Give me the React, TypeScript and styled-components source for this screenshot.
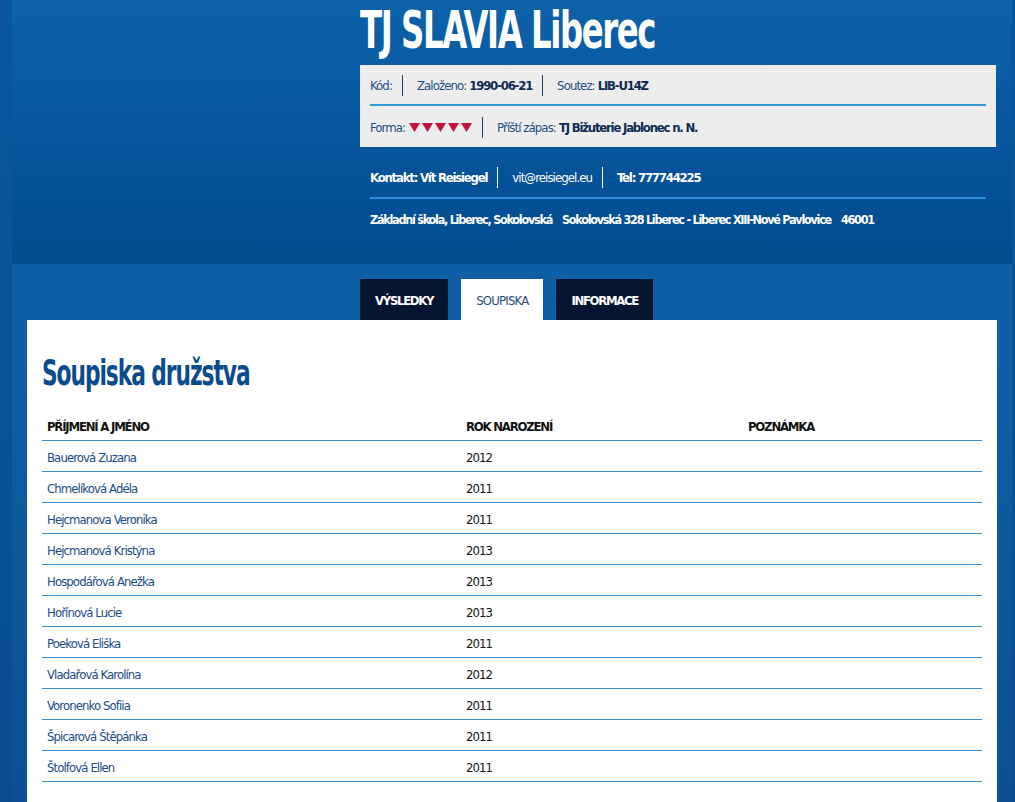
import React from "react";
import styled, { createGlobalStyle } from "styled-components";

const FONT = `"DejaVu Sans Condensed", "Liberation Sans", sans-serif`;

const Global = createGlobalStyle`
  html, body { margin: 0; padding: 0; }
  body {
    background: linear-gradient(to bottom, #0a559e 0%, #0a539a 40%, #084b8f 100%);
    font-family: ${FONT};
    min-height: 802px;
    overflow: hidden;
  }
`;

const Page = styled.div`
  margin-left: 12px;
  width: 1000px;
  min-height: 802px;
  display: flex;
  flex-direction: column;
`;

const Header = styled.header`
  height: 264px;
  box-sizing: border-box;
  padding: 0 16px 0 348px;
  background: linear-gradient(to bottom, #0d62a9 0%, #0857a0 45%, #024b8d 100%);
  display: flex;
  flex-direction: column;
`;

const TitleWrap = styled.div`
  height: 65px;
`;

const Title = styled.h1`
  margin: 0;
  font-family: ${FONT};
  font-weight: 700;
  font-size: 51px;
  line-height: 62px;
  color: #fff;
  white-space: nowrap;
  letter-spacing: -2px;
  transform: scale(0.705, 1);
  transform-origin: left center;
`;

const InfoBox = styled.div`
  background: #eeeded;
  padding: 10px;
  display: flex;
  flex-direction: column;
`;

const Row = styled.div`
  display: flex;
  align-items: center;
  height: 20px;
`;

const Divider = styled.div<{ $light?: boolean }>`
  height: 2px;
  background: ${(p) => (p.$light ? "#2b90de" : "#3498d4")};
  margin: ${(p) => (p.$light ? "10px 0 10px" : "9px 0 11px")};
`;

const Item = styled.div<{ $light?: boolean }>`
  font-size: 13px;
  letter-spacing: -0.9px;
  line-height: 20px;
  white-space: nowrap;
  color: ${(p) => (p.$light ? "#fff" : "#1c4d84")};
  padding: 1px 10px 0 14px;
  border-left: 1px solid ${(p) => (p.$light ? "#ffffff" : "#1c3f6a")};
  display: flex;
  align-items: center;
  gap: 3px;
  &:first-child {
    padding-left: 0;
    border-left: none;
  }
`;

const Val = styled.b<{ $light?: boolean }>`
  font-weight: 700;
  letter-spacing: -1.2px;
  color: ${(p) => (p.$light ? "#fff" : "#0d2a55")};
`;

const Triangles = styled.span`
  display: inline-flex;
  gap: 2px;
  margin-left: 1px;
`;

const Tri = () => (
  <svg width="11" height="9" viewBox="0 0 11 9">
    <polygon points="0,0 11,0 5.5,9" fill="#c2143d" />
  </svg>
);

const ContactBlock = styled.div`
  padding: 20px 10px 0 10px;
  display: flex;
  flex-direction: column;
`;

const Address = styled.div`
  font-size: 12.5px;
  letter-spacing: -1.25px;
  line-height: 20px;
  padding-top: 1px;
  color: #fff;
  font-weight: 700;
  display: flex;
  gap: 10px;
  white-space: nowrap;
`;

const Main = styled.main`
  flex: 1;
  background: linear-gradient(to bottom, #0f5fa6 0%, #0f5fa6 15%, #0a4f92 100%);
  padding: 15px 15px 0;
  display: flex;
  flex-direction: column;
`;

const Tabs = styled.nav`
  display: flex;
  justify-content: center;
  gap: 13px;
  padding-right: 11px;
`;

const Tab = styled.div<{ $active?: boolean }>`
  padding: 1px 15px 0;
  height: 41px;
  box-sizing: border-box;
  display: flex;
  align-items: center;
  justify-content: center;
  font-size: 13px;
  letter-spacing: ${(p) => (p.$active ? "-0.8px" : "-1.3px")};
  font-weight: ${(p) => (p.$active ? 400 : 700)};
  color: ${(p) => (p.$active ? "#1f4a7c" : "#fff")};
  background: ${(p) => (p.$active ? "#fff" : "#061631")};
  text-transform: uppercase;
`;

const Panel = styled.section`
  flex: 1;
  background: #fff;
  padding: 30px 15px 40px;
`;

const PanelTitle = styled.h2`
  margin: 0 0 14px;
  font-family: ${FONT};
  font-weight: 700;
  font-size: 35px;
  letter-spacing: -1.5px;
  line-height: 46px;
  color: #0b4b8b;
  white-space: nowrap;
  transform: scale(0.69, 1);
  transform-origin: left center;
`;

const Table = styled.div`
  display: flex;
  flex-direction: column;
`;

const TRow = styled.div<{ $head?: boolean }>`
  display: grid;
  grid-template-columns: 419px 282px 1fr;
  height: 31px;
  align-items: center;
  border-bottom: 1px solid #3b8fd0;
  box-sizing: border-box;
  font-size: 13px;
  letter-spacing: ${(p) => (p.$head ? "-1.2px" : "-0.9px")};
  font-weight: ${(p) => (p.$head ? 700 : 400)};
  text-transform: ${(p) => (p.$head ? "uppercase" : "none")};
`;

const Cell = styled.div<{ $kind?: "name" | "year" | "head" }>`
  padding: 2px 5px 0;
  white-space: nowrap;
  color: ${(p) =>
    p.$kind === "name" ? "#1a4c86" : p.$kind === "head" ? "#111" : "#151515"};
`;

const players: [string, string][] = [
  ["Bauerová Zuzana", "2012"],
  ["Chmelíková Adéla", "2011"],
  ["Hejcmanova Veronika", "2011"],
  ["Hejcmanová Kristýna", "2013"],
  ["Hospodářová Anežka", "2013"],
  ["Hořínová Lucie", "2013"],
  ["Poeková Eliška", "2011"],
  ["Vladařová Karolína", "2012"],
  ["Voronenko Sofiia", "2011"],
  ["Špicarová Štěpánka", "2011"],
  ["Štolfová Ellen", "2011"],
];

export default function App() {
  return (
    <>
      <Global />
      <Page>
        <Header>
          <TitleWrap>
            <Title>TJ SLAVIA Liberec</Title>
          </TitleWrap>
          <InfoBox>
            <Row>
              <Item>Kód:</Item>
              <Item>
                Založeno: <Val>1990-06-21</Val>
              </Item>
              <Item>
                Soutez: <Val>LIB-U14Z</Val>
              </Item>
            </Row>
            <Divider />
            <Row>
              <Item>
                Forma:
                <Triangles>
                  <Tri />
                  <Tri />
                  <Tri />
                  <Tri />
                  <Tri />
                </Triangles>
              </Item>
              <Item>
                Příští zápas: <Val>TJ Bižuterie Jablonec n. N.</Val>
              </Item>
            </Row>
          </InfoBox>
          <ContactBlock>
            <Row>
              <Item $light>
                <Val $light>Kontakt: Vít Reisiegel</Val>
              </Item>
              <Item $light>vit@reisiegel.eu</Item>
              <Item $light>
                <Val $light>Tel: 777744225</Val>
              </Item>
            </Row>
            <Divider $light />
            <Address>
              <span>Základní škola, Liberec, Sokolovská</span>
              <span>Sokolovská 328 Liberec - Liberec XIII-Nové Pavlovice</span>
              <span>46001</span>
            </Address>
          </ContactBlock>
        </Header>
        <Main>
          <Tabs>
            <Tab>Výsledky</Tab>
            <Tab $active>Soupiska</Tab>
            <Tab>Informace</Tab>
          </Tabs>
          <Panel>
            <PanelTitle>Soupiska družstva</PanelTitle>
            <Table>
              <TRow $head>
                <Cell $kind="head">Příjmení a jméno</Cell>
                <Cell $kind="head">Rok narození</Cell>
                <Cell $kind="head">Poznámka</Cell>
              </TRow>
              {players.map(([n, y]) => (
                <TRow key={n}>
                  <Cell $kind="name">{n}</Cell>
                  <Cell $kind="year">{y}</Cell>
                  <Cell />
                </TRow>
              ))}
            </Table>
          </Panel>
        </Main>
      </Page>
    </>
  );
}
